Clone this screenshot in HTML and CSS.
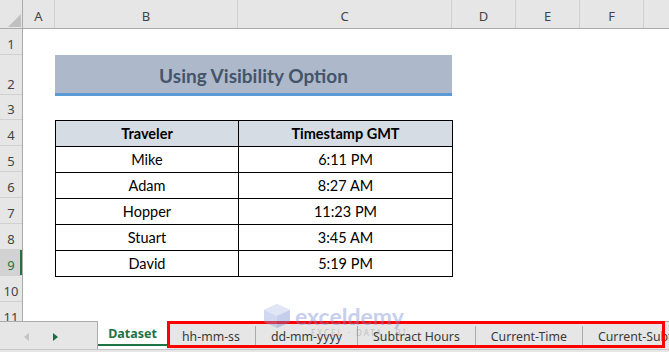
FILE: index.html
```html
<!DOCTYPE html>
<html>
<head>
<meta charset="utf-8">
<link rel="stylesheet" href="styles.css">
</head>
<body>
<div class="sheet">
  <div class="rowheads">
    <div class="corner"><svg class="tri" width="13" height="13" viewBox="0 0 13 13"><polygon points="13,0 13,13 0,13" fill="#C0C0C0"/></svg></div>
    <div class="rh h26">1</div>
    <div class="rh h40">2</div>
    <div class="rh h25">3</div>
    <div class="rh h26">4</div>
    <div class="rh h26">5</div>
    <div class="rh h26">6</div>
    <div class="rh h26">7</div>
    <div class="rh h26">8</div>
    <div class="rh h26 sel">9</div>
    <div class="rh h26">10</div>
    <div class="rh h26">11</div>
  </div>
  <div class="main">
    <div class="colheads">
      <div class="ch wa">A</div>
      <div class="ch wb">B</div>
      <div class="ch wc">C</div>
      <div class="ch wd">D</div>
      <div class="ch wd">E</div>
      <div class="ch wd">F</div>
      <div class="ch rest"></div>
    </div>
    <div class="grid">
      <div class="title">Using Visibility Option</div>
      <table class="data">
        <colgroup><col class="c1"><col class="c2"></colgroup>
        <tr class="head"><td>Traveler</td><td>Timestamp GMT</td></tr>
        <tr><td>Mike</td><td>6:11 PM</td></tr>
        <tr><td>Adam</td><td>8:27 AM</td></tr>
        <tr><td>Hopper</td><td>11:23 PM</td></tr>
        <tr><td>Stuart</td><td>3:45 AM</td></tr>
        <tr><td>David</td><td>5:19 PM</td></tr>
      </table>
    </div>
  </div>
</div>
<div class="tabbar">
  <div class="tabrow">
    <div class="nav">
      <svg class="arrow" width="5" height="8" viewBox="0 0 5 8"><polygon points="5,0 5,8 0,4" fill="#C3C3C3"/></svg>
      <svg class="arrow" width="5" height="8" viewBox="0 0 5 8"><polygon points="0,0 0,8 5,4" fill="#1E6B40"/></svg>
    </div>
    <div class="tab active"><span class="label">Dataset</span></div>
    <div class="tab">hh-mm-ss</div>
    <div class="sep"></div>
    <div class="tab">dd-mm-yyyy</div>
    <div class="sep"></div>
    <div class="tab">Subtract Hours</div>
    <div class="sep"></div>
    <div class="tab">Current-Time</div>
    <div class="sep"></div>
    <div class="tab">Current-Subtract</div>
  </div>
  <div class="bottomline"></div>
  <div class="redbox"></div>
</div>
<div class="watermark">
  <div class="wm-row">
    <svg class="wm-icon" width="28" height="24" viewBox="0 0 28 24"><polygon points="14,0 27,6 27,18 14,24 1,18 1,6" fill="#8FA3DC"/><polygon points="14,0 27,6 14,12 1,6" fill="#B5C3EC"/><polygon points="14,12 27,6 27,18 14,24" fill="#7189D2"/></svg>
    <span class="wm-text">exceldemy</span>
  </div>
  <div class="wm-sub">EXCEL · DATA · BI</div>
</div>
</body>
</html>
```
FILE: styles.css
```css
html, body {
  margin: 0;
  padding: 0;
}
body {
  width: 669px;
  height: 352px;
  overflow: hidden;
  position: relative;
  background: #ffffff;
  font-family: "Noto Sans", "Open Sans", sans-serif;
}
.sheet {
  display: flex;
  height: 321px;
  overflow: hidden;
}
.rowheads {
  width: 23px;
  flex: none;
  background: #E6E6E6;
  border-right: 1px solid #ABABAB;
  box-sizing: border-box;
}
.corner {
  height: 29px;
  border-bottom: 1px solid #ABABAB;
  box-sizing: border-box;
  position: relative;
}
.tri {
  position: absolute;
  left: 8px;
  top: 14px;
}
.rh {
  display: flex;
  align-items: flex-end;
  justify-content: center;
  box-sizing: border-box;
  border-bottom: 1px solid #D0D0D0;
  font-size: 13px;
  line-height: 16px;
  padding-bottom: 2px;
  color: #444444;
}
.h26 { height: 26px; }
.h40 { height: 40px; }
.h25 { height: 25px; }
.rh.sel {
  background: #D2D2D2;
  color: #217346;
  box-shadow: inset -2px 0 0 #217346;
}
.main {
  flex: 1;
  display: flex;
  flex-direction: column;
}
.colheads {
  display: flex;
  height: 29px;
  flex: none;
  background: #E6E6E6;
  border-bottom: 1px solid #ABABAB;
  box-sizing: border-box;
}
.ch {
  display: flex;
  align-items: flex-end;
  justify-content: center;
  box-sizing: border-box;
  border-right: 1px solid #D0D0D0;
  font-size: 13px;
  line-height: 16px;
  padding-bottom: 4px;
  color: #444444;
}
.wa { width: 32px; }
.wb { width: 183px; }
.wc { width: 214px; }
.wd { width: 64px; }
.rest { flex: 1; border-right: none; }
.grid {
  padding-top: 26px;
  padding-left: 32px;
  font-family: "Lato", "Liberation Sans", sans-serif;
}
.title {
  width: 397px;
  height: 41px;
  box-sizing: border-box;
  background: #ADB9CA;
  border-bottom: 3px solid #5B9BD5;
  display: flex;
  align-items: center;
  justify-content: center;
  padding-top: 3px;
  font-weight: 700;
  font-size: 19px;
  color: #44546A;
}
.data {
  margin-top: 24px;
  width: 398px;
  border-collapse: collapse;
  table-layout: fixed;
  font-size: 14.5px;
  color: #000000;
}
.c1 { width: 183px; }
.c2 { width: 214px; }
.data td {
  height: 25px;
  padding: 0;
  border: 1px solid #000000;
  text-align: center;
  vertical-align: middle;
  line-height: 16px;
}
.data .head td {
  background: #D6DCE4;
  font-weight: 700;
}
.tabbar {
  position: relative;
  height: 31px;
  background: #E6E6E6;
}
.tabrow {
  display: flex;
  height: 28px;
  align-items: stretch;
}
.nav {
  width: 98px;
  flex: none;
  box-sizing: border-box;
  border-top: 1px solid #ABABAB;
  border-right: 1px solid #ABABAB;
  display: flex;
  align-items: center;
  padding-left: 24px;
  gap: 24px;
  padding-top: 2px;
}
.tab {
  display: flex;
  align-items: center;
  padding: 0 15px;
  font-size: 12.3px;
  color: #3A3A3A;
  white-space: nowrap;
  border-top: 1px solid #ABABAB;
  box-sizing: border-box;
  padding-top: 1px;
}
.tab.active {
  width: 69px;
  flex: none;
  padding: 0 0 3px 0;
  border-top: none;
  background: #ffffff;
  flex-direction: column;
  align-items: stretch;
  font-size: 12.5px;
}
.tab.active .label {
  flex: 1;
  display: flex;
  align-items: center;
  justify-content: center;
  border-bottom: 2px solid #217346;
  font-weight: 700;
  color: #217346;
  padding-top: 2px;
}
.sep {
  width: 1px;
  flex: none;
  background: #ABABAB;
  margin: 5px 0 4px;
}
.bottomline {
  height: 1px;
  background: #C6C6C6;
}
.redbox {
  position: absolute;
  left: 167px;
  top: 0;
  width: 498px;
  height: 27px;
  box-sizing: border-box;
  border: 3px solid #FF0000;
}
.watermark {
  position: absolute;
  left: 263px;
  top: 303px;
  opacity: 0.4;
  pointer-events: none;
}
.wm-row {
  display: flex;
  align-items: center;
  gap: 4px;
}
.wm-text {
  font-family: "Lato", sans-serif;
  font-weight: 700;
  font-size: 23px;
  line-height: 26px;
  color: #7489D2;
}
.wm-sub {
  margin-left: 48px;
  margin-top: -2px;
  font-family: "Noto Sans", sans-serif;
  font-size: 8px;
  letter-spacing: 2px;
  color: #888888;
}
```
